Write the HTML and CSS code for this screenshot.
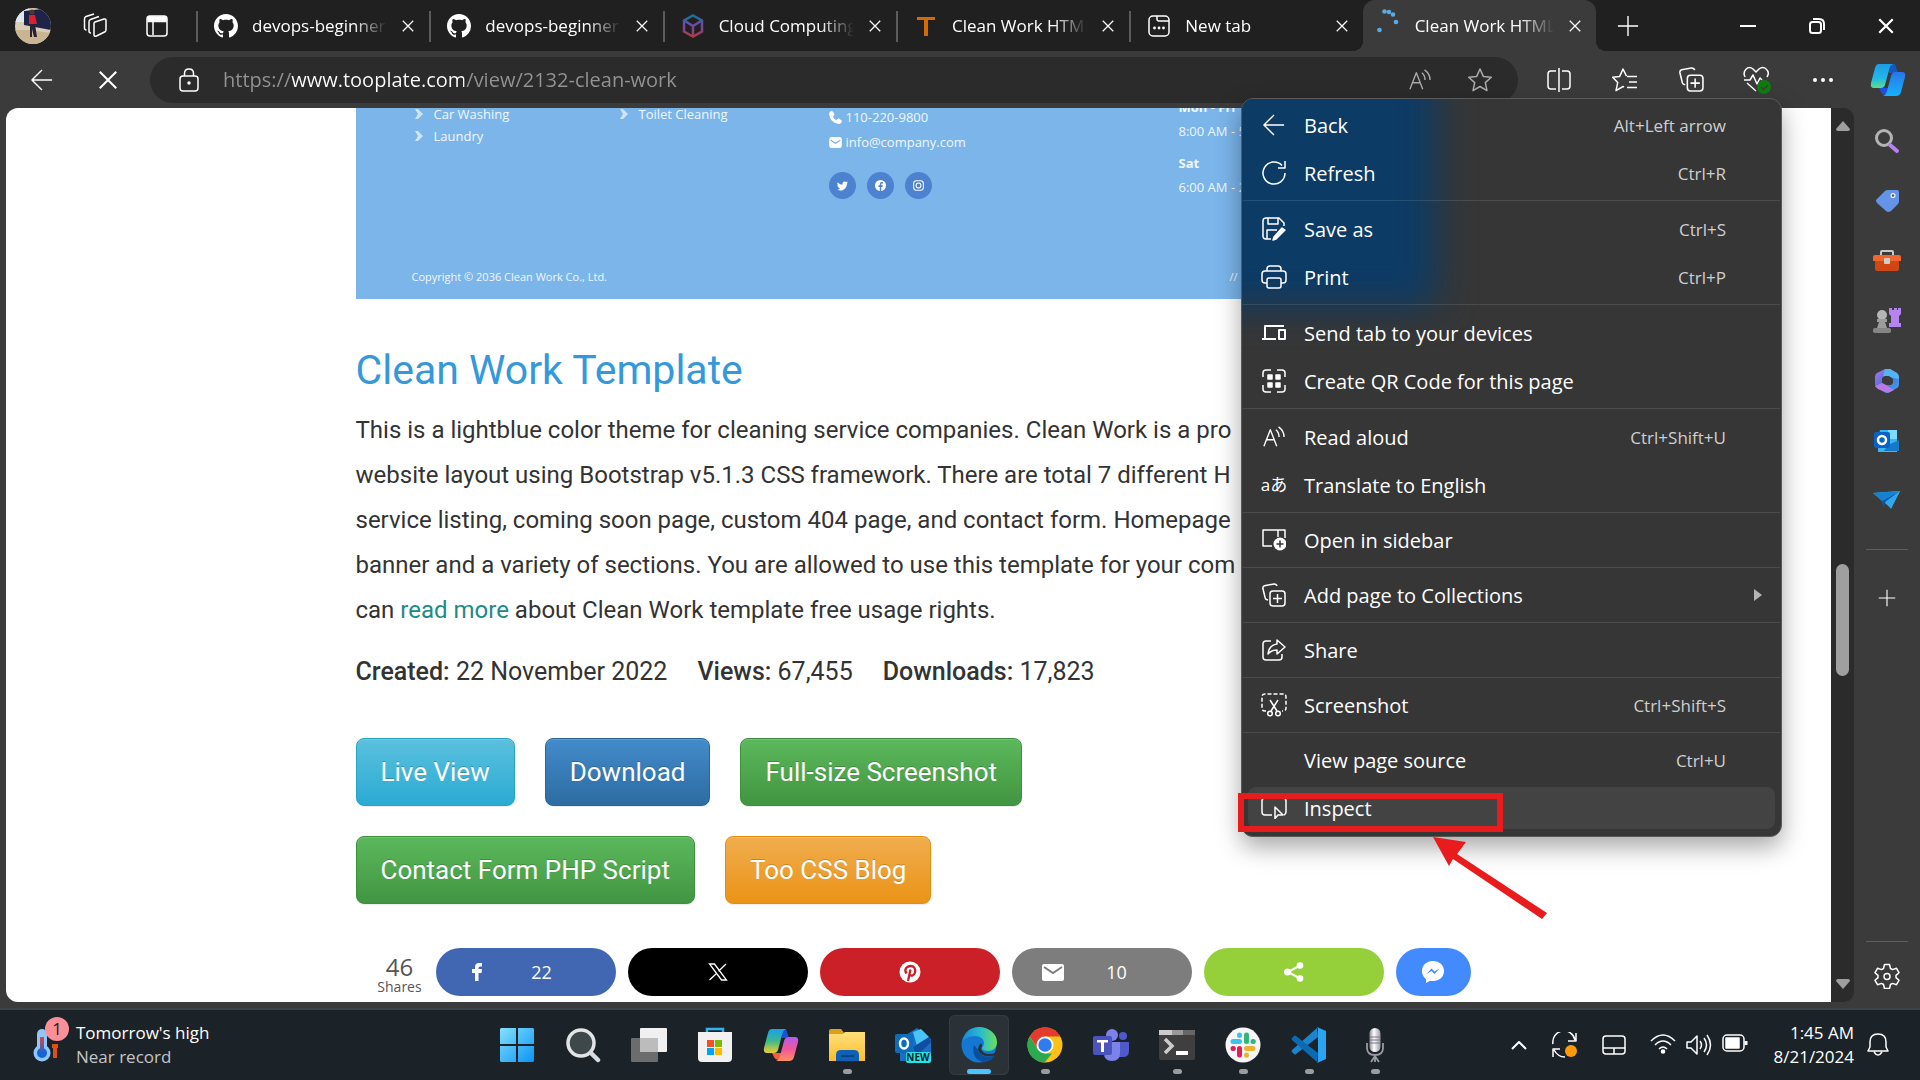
FILE: index.html
```html
<!DOCTYPE html>
<html lang="en">
<head>
<meta charset="utf-8">
<meta name="viewport" content="width=device-width, initial-scale=1">
<title>Clean Work HTML Template</title>
<link rel="stylesheet" href="styles.css">
</head>
<body>
<svg class="defs" aria-hidden="true">
  <defs>
    <symbol id="i-x" viewBox="0 0 16 16"><path d="M2 2l12 12M14 2L2 14"/></symbol>
    <symbol id="i-back" viewBox="0 0 24 24"><path d="M23 12H1M12 1L1 12l11 11"/></symbol>
    <symbol id="i-plus" viewBox="0 0 24 24"><path d="M12 1v22M1 12h22"/></symbol>
    <symbol id="i-github" viewBox="0 0 16 16"><path fill="#fff" stroke="none" d="M8 0C3.58 0 0 3.58 0 8c0 3.54 2.29 6.53 5.47 7.59.4.07.55-.17.55-.38 0-.19-.01-.82-.01-1.49-2.01.37-2.53-.49-2.69-.94-.09-.23-.48-.94-.82-1.13-.28-.15-.68-.52-.01-.53.63-.01 1.08.58 1.23.82.72 1.21 1.87.87 2.33.66.07-.52.28-.87.51-1.07-1.78-.2-3.64-.89-3.64-3.95 0-.87.31-1.59.82-2.15-.08-.2-.36-1.02.08-2.12 0 0 .67-.21 2.2.82.64-.18 1.32-.27 2-.27s1.36.09 2 .27c1.53-1.04 2.2-.82 2.2-.82.44 1.1.16 1.92.08 2.12.51.56.82 1.27.82 2.15 0 3.07-1.87 3.75-3.65 3.95.29.25.54.73.54 1.48 0 1.07-.01 1.93-.01 2.2 0 .21.15.46.55.38A8.01 8.01 0 0 0 16 8c0-4.42-3.58-8-8-8z"/></symbol>
    <symbol id="i-read" viewBox="0 0 24 24"><path d="M1 22L8 4l7 18M4 15h8M14 4c2.500 2 3.500 4.500 3.500 8M17 1c4 3 6 7 6 11"/></symbol>
    <symbol id="i-collect" viewBox="0 0 24 24"><path d="M6 17L4.500 16.500Q3.500 16 3.200 15L.9 5.500Q.6 3.300 2.500 2.700L12 .9Q14.500 .8 15 3"/><rect x="8" y="8" width="15" height="15" rx="3"/><path d="M15.500 11v9M11 15.500h9"/></symbol>
    <symbol id="i-chev" viewBox="0 0 10 12"><path d="M1 1h3l5 5-5 5H1l3-5z" fill="#cfe4f8" stroke="none"/></symbol>
    <linearGradient id="g-cop1" x1="0" y1="0" x2="0" y2="1"><stop offset="0" stop-color="#1d9be8"/><stop offset=".6" stop-color="#22b8e6"/><stop offset="1" stop-color="#5be08a"/></linearGradient>
    <linearGradient id="g-cop2" x1="0" y1="0" x2="0" y2="1"><stop offset="0" stop-color="#2a75e8"/><stop offset="1" stop-color="#14b4fa"/></linearGradient>
    <linearGradient id="g-cop3" x1="0" y1="0" x2="0" y2="1"><stop offset="0" stop-color="#1b9ff0"/><stop offset=".5" stop-color="#3cb88c"/><stop offset="1" stop-color="#f2cc2c"/></linearGradient>
    <linearGradient id="g-cop4" x1="0" y1="0" x2="0" y2="1"><stop offset="0" stop-color="#b45cf0"/><stop offset=".5" stop-color="#f0569c"/><stop offset="1" stop-color="#ff9060"/></linearGradient>
    <linearGradient id="g-win" x1="0" y1="0" x2="1" y2="1"><stop offset="0" stop-color="#85e0fd"/><stop offset="1" stop-color="#0a94f5"/></linearGradient>
    <linearGradient id="g-fold" x1="0" y1="0" x2="0" y2="1"><stop offset="0" stop-color="#ffe07a"/><stop offset="1" stop-color="#fcbe2e"/></linearGradient>
    <linearGradient id="g-edge" x1="0" y1="0" x2="1" y2="0"><stop offset="0" stop-color="#1887d8"/><stop offset=".5" stop-color="#28b8d0"/><stop offset="1" stop-color="#6ae05c"/></linearGradient>
    <linearGradient id="g-365" x1="0" y1="0" x2="1" y2="1"><stop offset="0" stop-color="#b078e8"/><stop offset=".5" stop-color="#4c6ce0"/><stop offset="1" stop-color="#38b0ee"/></linearGradient>
    <linearGradient id="g-hex" x1="0" y1="0" x2="0" y2="1"><stop offset="0" stop-color="#16749c"/><stop offset=".5" stop-color="#7a44a4"/><stop offset="1" stop-color="#a83c44"/></linearGradient>
    <linearGradient id="g-mic" x1="0" y1="0" x2="1" y2="0"><stop offset="0" stop-color="#8c8c98"/><stop offset=".4" stop-color="#fff"/><stop offset="1" stop-color="#9a9aa6"/></linearGradient>
    <linearGradient id="g-therm" x1="0" y1="0" x2="0" y2="1"><stop offset="0" stop-color="#e8403c"/><stop offset="1" stop-color="#1464d8"/></linearGradient>
  </defs>
</svg>

<header class="tabstrip">
  <div class="tab-tools">
    <button class="icon-btn" aria-label="Profile"><svg width="36" height="36" viewBox="0 0 36 36"><clipPath id="c-av"><circle cx="18" cy="18" r="18"/></clipPath><g clip-path="url(#c-av)"><path fill="#d9cdb8" d="M0 0h36v36H0z"/><path fill="#dfe8f0" d="M0 0h14v14H0z"/><path fill="#1d2447" d="M9 3l27-3v22l-27-5z"/><path fill="#c9b592" d="M0 22h14l22 3v11H0z"/><path fill="#d8202e" d="M14 7h6l2 9h-8z"/><circle cx="17" cy="4" r="2.500" fill="#5a3428"/><path fill="#2a2036" d="M15 16h5l2 13h-3l-2-8v8h-2z"/></g></svg></button>
    <button class="icon-btn" aria-label="Workspaces"><svg class="ln" width="26" height="26" viewBox="0 0 26 26"><path d="M13 9l9-3q2-.5 2 1.500v9q0 2-1.500 2.500l-8 4Q12 24 12 21.500v-11Q12 9.500 13 9zM9 20q-2 0-2-2V9q0-2 1.500-2.500L17 3.500M4.500 17q-2 0-2-2V6q0-2 1.500-2.500L12 1"/></svg></button>
    <button class="icon-btn" aria-label="Tab actions"><svg class="ln" width="22" height="22" viewBox="0 0 22 22"><rect x="1" y="1" width="20" height="20" rx="3"/><path d="M2 2h18v4.500H2z" fill="#fff"/><path d="M7 7v13"/></svg></button>
  </div>
  <nav class="tabs" aria-label="Tabs">
    <div class="tab"><svg width="24" height="24"><use href="#i-github"/></svg><button class="tab-name">devops-beginner-to-advanced</button><button class="close" aria-label="Close tab"><svg class="ln" width="14" height="14"><use href="#i-x"/></svg></button></div>
    <div class="tab"><svg width="24" height="24"><use href="#i-github"/></svg><button class="tab-name">devops-beginner-to-advanced</button><button class="close" aria-label="Close tab"><svg class="ln" width="14" height="14"><use href="#i-x"/></svg></button></div>
    <div class="tab"><svg width="24" height="24" viewBox="0 0 24 24" fill="none" stroke="url(#g-hex)" stroke-width="2.500"><path d="M12 1.500l9 5v11l-9 5-9-5v-11zM4 7l8 5 8-5M12 12v10"/></svg><button class="tab-name">Cloud Computing Services</button><button class="close" aria-label="Close tab"><svg class="ln" width="14" height="14"><use href="#i-x"/></svg></button></div>
    <div class="tab"><svg width="24" height="24" viewBox="0 0 24 24"><path fill="#d66a04" d="M3 3h18v3h-7v16h-4V6H3z"/></svg><button class="tab-name">Clean Work HTML Template</button><button class="close" aria-label="Close tab"><svg class="ln" width="14" height="14"><use href="#i-x"/></svg></button></div>
    <div class="tab"><svg class="ln" width="24" height="24" viewBox="0 0 24 24"><rect x="2" y="2" width="20" height="20" rx="4"/><path d="M10 2v3q0 2 2 2h10"/><g fill="#fff" stroke="none"><circle cx="7.500" cy="14" r="1.400"/><circle cx="12" cy="14" r="1.400"/><circle cx="16.500" cy="14" r="1.400"/></g></svg><button class="tab-name">New tab</button><button class="close" aria-label="Close tab"><svg class="ln" width="14" height="14"><use href="#i-x"/></svg></button></div>
    <div class="tab active"><svg class="spinner" width="24" height="24" viewBox="0 0 24 24" fill="#5aaae6"><circle cx="2.500" cy="21" r="2.300"/><circle cx="7.500" cy="2.500" r="2.300"/><circle cx="12" cy="3" r="2.300"/><circle cx="16" cy="5.500" r="2.300"/><circle cx="19" cy="13" r="2.300"/></svg><button class="tab-name">Clean Work HTML Template</button><button class="close" aria-label="Close tab"><svg class="ln" width="14" height="14"><use href="#i-x"/></svg></button></div>
  </nav>
  <button class="icon-btn new-tab" aria-label="New tab"><svg class="ln" width="22" height="22"><use href="#i-plus"/></svg></button>
  <div class="win-controls">
    <button class="icon-btn" aria-label="Minimize"><svg class="ln2" width="16" height="16"><path d="M0 8h16"/></svg></button>
    <button class="icon-btn" aria-label="Restore"><svg class="ln2" width="16" height="16" viewBox="0 0 16 16"><rect x="1" y="4" width="11" height="11" rx="2.500"/><path d="M4 1h6q5 0 5 5v6"/></svg></button>
    <button class="icon-btn" aria-label="Close"><svg class="ln2" width="18" height="18"><use href="#i-x"/></svg></button>
  </div>
</header>

<div class="toolbar">
  <button class="icon-btn nav-btn" aria-label="Back"><svg class="ln" width="24" height="22"><use href="#i-back"/></svg></button>
  <button class="icon-btn nav-btn" aria-label="Stop loading"><svg class="ln" width="22" height="22"><use href="#i-x"/></svg></button>
  <div class="address">
    <svg class="ln" width="20" height="24" viewBox="0 0 20 24"><rect x="1" y="8" width="18" height="15" rx="3"/><path d="M5.500 8V5.500q0-4.500 4.500-4.500t4.500 4.500V8"/><circle cx="10" cy="15" r="1" fill="#fff"/></svg>
    <input class="url" type="text" aria-label="Address" value="https://www.tooplate.com/view/2132-clean-work">
    <button class="icon-btn dim" aria-label="Read aloud"><svg class="ln" width="24" height="22"><use href="#i-read"/></svg></button>
    <button class="icon-btn dim" aria-label="Add to favorites"><svg class="ln" width="26" height="26" viewBox="0 0 26 26"><path d="M13 2l3.300 7.400 8 .8-6 5.400 1.700 8L13 19.500 6 23.600l1.700-8-6-5.400 8-.8z"/></svg></button>
  </div>
  <div class="tools">
    <button class="icon-btn" aria-label="Split screen"><svg class="ln" width="24" height="24" viewBox="0 0 24 24"><path d="M9 3H4Q1 3 1 6v12q0 3 3 3h5M15 3h5q3 0 3 3v12q0 3-3 3h-5M12 0v24"/></svg></button>
    <button class="icon-btn" aria-label="Favorites"><svg class="ln" width="26" height="26" viewBox="0 0 26 26"><path d="M14.500 9.200L11 2 7.700 9.400l-7 .8 5 5.400-1.700 8L11 19.500l1 .6M15 9.500h10M17 15h8M15 20.500h10"/></svg></button>
    <button class="icon-btn" aria-label="Collections"><svg class="ln" width="25" height="25"><use href="#i-collect"/></svg></button>
    <button class="icon-btn" aria-label="Browser essentials"><svg class="ln" width="28" height="28" viewBox="0 0 28 28"><path d="M2 11C-1 5 5-1 10 3l3 3 3-3c5-4 12 2 8 8M1 14h6l3-5 4 9 3-6 2 2M4 17l9 8"/><circle cx="21" cy="21" r="7" fill="#107c10" stroke="none"/><path d="M18 21l2.500 2.500L25 19" stroke="#3c3c3c"/></svg></button>
    <button class="icon-btn" aria-label="Settings and more"><svg width="22" height="22" fill="#fff"><circle cx="3" cy="11" r="2"/><circle cx="11" cy="11" r="2"/><circle cx="19" cy="11" r="2"/></svg></button>
    <button class="icon-btn" aria-label="Copilot"><svg width="36" height="34" viewBox="0 0 36 34"><path fill="#1659b8" d="M20 1h5l3 9h-9z"/><path fill="#1d4fe0" d="M9 25h11l-3 7q-5 0-6-3z"/><path fill="url(#g-cop1)" d="M9 1h14q-3 1-4 6l-4 15q-1 3-4 3H4q-4 0-3-5L5 5q1-4 4-4z"/><path fill="url(#g-cop2)" d="M26 9h6q4 0 3 5l-4 15q-1 4-5 4H13q3-1 4-5l4-15q1-4 5-4z"/></svg></button>
  </div>
</div>

<div class="workspace">
  <main class="page">
    <div class="container">
      <section class="banner">
        <div class="banner-cols">
          <ul class="svc"><li><svg width="10" height="12"><use href="#i-chev"/></svg>Car Washing</li><li><svg width="10" height="12"><use href="#i-chev"/></svg>Laundry</li></ul>
          <ul class="svc"><li><svg width="10" height="12"><use href="#i-chev"/></svg>Toilet Cleaning</li></ul>
          <div class="contact">
            <p><svg width="13" height="13" viewBox="0 0 16 16" fill="#fff"><path d="M4 0l3 4-2 3q1 3 4 4l3-2 4 3q-1 4-4 4Q1 14 0 3q1-3 4-3z"/></svg>110-220-9800</p>
            <p><svg width="13" height="11" viewBox="0 0 16 14"><rect width="16" height="14" rx="3" fill="#fff"/><path d="M2 4l6 4 6-4" fill="none" stroke="#7bb5ea" stroke-width="1.500"/></svg>info@company.com</p>
            <div class="social">
              <a href="#" aria-label="Twitter"><svg width="11" height="10" viewBox="0 0 24 20" fill="#fff"><path d="M24 2.500l-2.500 2.400C22 14 14 20 7.500 20 4.700 20 2 19.200 0 17.800c2.600.3 5-.4 7-2-2-.1-3.800-1.500-4.500-3.400h2C2.300 11.900.7 10 .7 7.600l2.100.5C.6 6.600.1 4 1.300 1.800 4 4.900 7.700 6.800 11.900 7 11 3.500 13.600 0 17 0c1.500 0 2.700.6 3.600 1.500l3-1.200-2 2.700z"/></svg></a>
              <a href="#" aria-label="Facebook"><svg width="11" height="11" viewBox="0 0 16 16"><circle cx="8" cy="8" r="8" fill="#fff"/><path fill="#4c82d0" d="M7 16V10H5V7.500h2V6q0-3 3-3h1.500v2H10q-1 0-1 1v1.500h2.300L11 10H9v6z"/></svg></a>
              <a href="#" aria-label="Instagram"><svg width="11" height="11" viewBox="0 0 16 16" fill="none" stroke="#fff" stroke-width="1.500"><rect x="1" y="1" width="14" height="14" rx="4"/><circle cx="8" cy="8" r="3.500"/></svg></a>
            </div>
          </div>
          <div class="hours"><b>Mon - Fri</b><span>8:00 AM - 5:30 PM</span><b>Sat</b><span>6:00 AM - 2:30 PM</span></div>
        </div>
        <footer class="banner-foot"><span>Copyright © 2036 Clean Work Co., Ltd.</span><span>//</span></footer>
      </section>

      <h1>Clean Work Template</h1>
      <p class="desc">
        <span>This is a lightblue color theme for cleaning service companies. Clean Work is a pro</span>
        <span>website layout using Bootstrap v5.1.3 CSS framework. There are total 7 different H</span>
        <span>service listing, coming soon page, custom 404 page, and contact form. Homepage</span>
        <span>banner and a variety of sections. You are allowed to use this template for your com</span>
        <span>can <a href="#">read more</a> about Clean Work template free usage rights.</span>
      </p>
      <p class="stats"><span><b>Created:</b> 22 November 2022</span><span><b>Views:</b> 67,455</span><span><b>Downloads:</b> 17,823</span></p>

      <div class="actions">
        <button class="btn info">Live View</button>
        <button class="btn primary">Download</button>
        <button class="btn success">Full-size Screenshot</button>
      </div>
      <div class="actions">
        <button class="btn success">Contact Form PHP Script</button>
        <button class="btn warning">Too CSS Blog</button>
      </div>

      <div class="share">
        <div class="total"><b>46</b><span>Shares</span></div>
        <button class="pill fb counted" aria-label="Facebook, 22"><svg width="24" height="20" viewBox="0 0 24 20"><path fill="#fff" d="M10 19v-8H7V7h3V5q0-4 4-4h3v3.500h-2q-1.500 0-1.500 1.500v1h3.500l-.5 4h-3v8z"/></svg><span>22</span></button>
        <button class="pill tw" aria-label="X"><svg width="20" height="18" viewBox="0 0 20 18" fill="none" stroke="#fff" stroke-width="1.300"><path d="M1.500 1h5l12 16h-5zM18 1l-7.500 7.200M1.500 17L9 10"/></svg></button>
        <button class="pill pin" aria-label="Pinterest"><svg width="22" height="22" viewBox="0 0 22 22"><circle cx="11" cy="11" r="10.500" fill="#fff"/><path d="M7.500 12.500C4.500 8 8 5 11.500 5s5.500 3 4.500 6.500-4.500 4-5 2M11.500 8.500L9 20" fill="none" stroke="#cb2027" stroke-width="2.300"/></svg></button>
        <button class="pill mail counted" aria-label="Email, 10"><svg width="22" height="17" viewBox="0 0 22 17"><rect width="22" height="17" rx="2" fill="#fff"/><path d="M2 3l9 6 9-6" fill="none" stroke="#7d7d7d" stroke-width="2"/></svg><span>10</span></button>
        <button class="pill st" aria-label="Share"><svg width="20" height="20" viewBox="0 0 20 20" fill="#fff"><circle cx="3.500" cy="10" r="3.500"/><circle cx="16" cy="3.500" r="3.300"/><circle cx="16" cy="16.500" r="3.300"/><path d="M16 3.500L4 10l12 6.500" fill="none" stroke="#fff" stroke-width="2"/></svg></button>
        <button class="pill msg" aria-label="Messenger"><svg width="24" height="24" viewBox="0 0 24 24"><path fill="#fff" d="M12 1C5.500 1 1 5.300 1 11c0 3.500 1.500 6 4 8v4l4-2.300q1.500.3 3 .3c6.500 0 11-4.300 11-10S18.500 1 12 1z"/><path d="M5.500 14l5-5.500 3 3 5-3-5 5.500-3-3z" fill="#448aff"/></svg></button>
      </div>
    </div>
  </main>
  <div class="scroll" aria-hidden="true"><svg width="16" height="10"><path d="M8 0l7 8q0 2-2 2H3Q1 10 1 8z"/></svg><div class="track"><i class="thumb"></i></div><svg width="16" height="10"><path d="M8 10l7-8q0-2-2-2H3Q1 0 1 2z"/></svg></div>
  <aside class="sidebar">
    <button class="icon-btn" aria-label="Search"><svg width="26" height="26" viewBox="0 0 26 26" fill="none"><circle cx="10" cy="10" r="7.500" stroke="#b4b4b4" stroke-width="3"/><path d="M16 17l7 6" stroke="#b583ea" stroke-width="4" stroke-linecap="round"/></svg></button>
    <button class="icon-btn" aria-label="Shopping"><svg width="26" height="26" viewBox="0 0 26 26"><path fill="#6593e8" d="M14 2h9q2 0 2 2v9q0 2-1 3l-7 7q-3 2-5 0l-9-8q-2-3 0-4l8-8q1-1 3-1z"/><circle cx="19" cy="7.500" r="2.500" fill="#fff"/><circle cx="19" cy="7.500" r="1.200" fill="#2b4d9c"/></svg></button>
    <button class="icon-btn" aria-label="Tools"><svg width="28" height="24" viewBox="0 0 28 24"><path d="M8 7V3q0-1 1-1h10q1 0 1 1v4" fill="none" stroke="#c8c8c8" stroke-width="2"/><path fill="#f0662c" d="M2 6h24q2 0 2 2v4H0V8q0-2 2-2z"/><path fill="#cf4712" d="M2 12h24v8q0 2-2 2H4q-2 0-2-2z"/><rect x="11" y="9" width="6" height="6" rx="1" fill="#ccc"/></svg></button>
    <button class="icon-btn" aria-label="Games"><svg width="28" height="28" viewBox="0 0 28 28"><circle cx="9" cy="8" r="5" fill="#b5b5b5"/><path fill="#9c9c9c" d="M4 12h10v3h-2l2 6H4l2-6H4z"/><rect y="21" width="18" height="5" rx="2" fill="#858585"/><path fill="#b684ee" d="M16 1h3v2h2V1h3v2h1V1h3v6l-2 2v7h2v4H16v-4h2V9l-2-2z"/></svg></button>
    <button class="icon-btn" aria-label="Microsoft 365"><svg width="26" height="26" viewBox="0 0 26 26"><path fill="url(#g-365)" fill-rule="evenodd" d="M11 1h5l7 4q2 1 2 4v7q0 3-2 4l-7 4q-3 2-6 0l-7-4q-2-1-2-4V9q0-3 2-4zM11 8l-3 2v5l4 2h5l2-2v-4l-4-3z"/><path fill="#52b4f2" d="M11 1h5l7 4q2 2 2 6l-6-1-4-2h-6z"/><path fill="#b77be6" d="M1 18l7-3 4 2 8 5-4 2q-2 1-5 0l-7-3z"/></svg></button>
    <button class="icon-btn" aria-label="Outlook"><svg width="26" height="24" viewBox="0 0 26 24"><path fill="#38b6f2" d="M6 1h17v22H4V12z"/><path fill="#7bdcff" d="M14 1h9v9h-9z"/><path fill="#147ac8" d="M14 16l11-5v11H10z"/><rect y="3" width="16" height="16" rx="2" fill="#0a63c4"/><circle cx="8" cy="11" r="4" fill="none" stroke="#fff" stroke-width="2.500"/></svg></button>
    <button class="icon-btn" aria-label="Drop"><svg width="28" height="22" viewBox="0 0 28 22"><path fill="#3cc2f5" d="M0 3l27-2-9 17-6-5z"/><path fill="#1482d2" d="M0 3l27-2L9 11z"/><path fill="#0b56a4" d="M9 11L27 1 12 13l-2 5z"/><path fill="#2fa8ee" d="M12 12L27 1l-9 18z"/></svg></button>
    <hr>
    <button class="icon-btn" aria-label="Customize"><svg class="ln" width="18" height="18"><use href="#i-plus"/></svg></button>
    <hr class="push">
    <button class="icon-btn gear" aria-label="Settings"><svg class="ln" width="26" height="26" viewBox="0 0 26 26"><path d="M10.500 1.500h5l1 4 2 1.100 4-1.300 2.500 4.400-3 2.700v2.200l3 2.700-2.500 4.400-4-1.300-2 1.100-1 4h-5l-1-4-2-1.100-4 1.300L1 17.300l3-2.700v-2.200L1 9.700l2.500-4.400 4 1.300 2-1.100z"/><circle cx="13" cy="13.500" r="3"/></svg></button>
  </aside>
</div>

<div class="menu-layer">
  <menu class="menu">
    <li><button><svg class="ln" width="24" height="22"><use href="#i-back"/></svg><span>Back</span><kbd>Alt+Left arrow</kbd></button></li>
    <li><button><svg class="ln" width="26" height="26" viewBox="0 0 26 26"><path d="M24 13A11 11 0 1 1 21 5.500M24 1v7h-7"/></svg><span>Refresh</span><kbd>Ctrl+R</kbd></button></li>
    <li class="sep"></li>
    <li><button><svg class="ln" width="24" height="24" viewBox="0 0 24 24"><path d="M9 22H4q-3 0-3-3V4q0-3 3-3h13l5 5v3M6 1v6h10V1M5 22v-9h10"/><path d="M12 20l8-9 3 2-9 9-3 1z" fill="#fff"/></svg><span>Save as</span><kbd>Ctrl+S</kbd></button></li>
    <li><button><svg class="ln" width="26" height="24" viewBox="0 0 26 24"><path d="M6 18H4q-3 0-3-3V9q0-3 3-3h18q3 0 3 3v6q0 3-3 3h-2M6 6V4q0-3 3-3h8q3 0 3 3v2"/><rect x="6" y="13" width="14" height="10" rx="2"/></svg><span>Print</span><kbd>Ctrl+P</kbd></button></li>
    <li class="sep"></li>
    <li><button><svg class="ln2" width="24" height="18" viewBox="0 0 24 18"><path d="M3 14V2h19M0 15h14M17 6h6v9h-6z"/></svg><span>Send tab to your devices</span></button></li>
    <li><button><svg class="ln" width="24" height="24" viewBox="0 0 24 24"><path d="M1 8V4q0-3 3-3h5M15 1h5q3 0 3 3v4M1 16v4q0 3 3 3h5M15 23h5q3 0 3-3v-4"/><path d="M6 6h4v4H6zM14 6h4v4h-4zM6 14h4v4H6zM14 14h4v4h-4z" fill="#fff"/></svg><span>Create QR Code for this page</span></button></li>
    <li class="sep"></li>
    <li><button><svg class="ln" width="24" height="22"><use href="#i-read"/></svg><span>Read aloud</span><kbd>Ctrl+Shift+U</kbd></button></li>
    <li><button><i class="lang" aria-hidden="true">aあ</i><span>Translate to English</span></button></li>
    <li class="sep tight"></li>
    <li><button><svg class="ln" width="24" height="22" viewBox="0 0 24 22"><path d="M10 17H1V1h22v8M16 1v7"/><circle cx="18" cy="15" r="6.500" fill="#fff" stroke="none"/><path d="M18 11.500v7M14.500 15h7" stroke="#363636"/></svg><span>Open in sidebar</span></button></li>
    <li class="sep tight"></li>
    <li><button><svg class="ln" width="24" height="24"><use href="#i-collect"/></svg><span>Add page to Collections</span><svg class="more" width="8" height="12"><path d="M0 0l8 6-8 6z" fill="#b4b4b4"/></svg></button></li>
    <li class="sep tight"></li>
    <li><button><svg class="ln" width="24" height="22" viewBox="0 0 24 22"><path d="M9 2H4Q1 2 1 5v13q0 3 3 3h13q3 0 3-3v-3M15 1l8 7-8 7v-4q-6 0-9 4 1-9 9-10z"/></svg><span>Share</span></button></li>
    <li class="sep tight"></li>
    <li><button><svg class="ln" width="26" height="24" viewBox="0 0 26 24"><path stroke-dasharray="4 2" d="M5 18H4q-3 0-3-3V4q0-3 3-3h18q3 0 3 3v11q0 3-3 3h-1"/><path d="M9 7l7 11M17 7l-7 11"/><circle cx="9" cy="20.500" r="2.300"/><circle cx="17" cy="20.500" r="2.300"/></svg><span>Screenshot</span><kbd>Ctrl+Shift+S</kbd></button></li>
    <li class="sep tight"></li>
    <li><button><i></i><span>View page source</span><kbd>Ctrl+U</kbd></button></li>
    <li><button class="hover"><svg class="ln" width="26" height="22" viewBox="0 0 26 22"><path d="M11 18H4q-3 0-3-3V4q0-3 3-3h18q3 0 3 3v11q0 2-2 3M14 10l8 8h-5l-3 3.500z"/></svg><span>Inspect</span></button></li>
  </menu>
  <div class="highlight"></div>
  <svg class="pointer" width="114" height="82" viewBox="0 0 114 82"><path fill="#e81c1c" d="M0 0l33 5-9 12 90 59-5 6-89-60-4 7z"/></svg>
</div>

<footer class="taskbar">
  <button class="weather">
    <svg width="36" height="46" viewBox="0 0 36 46"><rect x="4" y="12" width="10" height="26" rx="5" fill="#8cc8fa"/><circle cx="9" cy="36" r="8.500" fill="#8cc8fa"/><circle cx="9" cy="36" r="5" fill="#1464d8"/><path d="M7 20h4v16H7z" fill="url(#g-therm)"/><path d="M22 41V27M19 29h6" stroke="#e05010" stroke-width="4" fill="none"/><circle cx="24" cy="12" r="12" fill="#fb8f98"/><text x="24" y="18" text-anchor="middle">1</text></svg>
    <span>Tomorrow's high<small>Near record</small></span>
  </button>
  <nav class="apps" aria-label="Apps">
    <button aria-label="Start"><svg width="36" height="36" viewBox="0 0 36 36"><path fill="url(#g-win)" d="M1 2l1-1h15v16H1zM19 1h15l1 1v15H19zM1 19h16v16H2l-1-1zM19 19h16v15l-1 1H19z"/></svg></button>
    <button aria-label="Search"><svg width="36" height="36" viewBox="0 0 36 36"><circle cx="16" cy="16" r="13" fill="#3e474a" stroke="#e2e4e6" stroke-width="3.500"/><path d="M26 26l7 7" stroke="#d8dce0" stroke-width="4.500" stroke-linecap="round"/></svg></button>
    <button aria-label="Task view"><svg width="38" height="36" viewBox="0 0 38 36"><rect x="1" y="11" width="27" height="24" rx="1" fill="#6a6c6e"/><rect x="10" y="1" width="27" height="24" rx="1" fill="#f0f0f0"/><path fill="#bcbcbc" d="M10 11h18v14H10z"/></svg></button>
    <button aria-label="Store"><svg width="36" height="36" viewBox="0 0 36 36"><path d="M10 6V2h16v4" fill="none" stroke="#34b2ee" stroke-width="2.500"/><path fill="#f1f1f1" d="M1 5h34v26q0 4-4 4H5q-4 0-4-4z"/><path fill="#f25022" d="M10 13h7v7h-7z"/><path fill="#7fba00" d="M18 13h7v7h-7z"/><path fill="#00a4ef" d="M10 21h7v7h-7z"/><path fill="#ffb900" d="M18 21h7v7h-7z"/></svg></button>
    <button aria-label="Copilot"><svg width="36" height="34" viewBox="0 0 36 34"><path fill="#1c50d8" d="M18 1h5l3 9h-7z"/><path fill="#f0603c" d="M9 25h11l-3 7q-5 0-6-3z"/><path fill="url(#g-cop3)" d="M9 1h14q-3 1-4 6l-4 15q-1 3-4 3H4q-4 0-3-5L5 5q1-4 4-4z"/><path fill="url(#g-cop4)" d="M26 9h6q4 0 3 5l-4 15q-1 4-5 4H13q3-1 4-5l4-15q1-4 5-4z"/></svg></button>
    <button class="open" aria-label="File Explorer"><svg width="36" height="36" viewBox="0 0 36 36"><path fill="#dda01a" d="M0 4q0-2 2-2h10l4 5v6H0z"/><path fill="url(#g-fold)" d="M0 7h14l2-2h20v29H0z"/><path fill="#0e62b6" d="M7 34v-6q0-5 5-5h13q5 0 5 5v6z"/><path stroke="#0a3f80" stroke-width="2" d="M12 29h13"/></svg></button>
    <button aria-label="Outlook"><svg width="36" height="36" viewBox="0 0 36 36"><path fill="#1a6fc4" d="M5 12L22 1l14 11v22H5z"/><path fill="#48c4f5" d="M18 5l8-3 8 8-12 9z"/><path fill="#0f4ea0" d="M18 20l16-10 2 5-14 14z"/><rect y="7" width="18" height="19" rx="2" fill="#0f6cbd"/><ellipse cx="9" cy="16.500" rx="4" ry="5" fill="none" stroke="#fff" stroke-width="2.500"/><rect x="11" y="25" width="25" height="11" rx="2" fill="#24e4e4"/><text class="new" x="23" y="34" text-anchor="middle">NEW</text></svg></button>
    <button class="open current" aria-label="Edge"><svg width="36" height="36" viewBox="0 0 36 36"><circle cx="18" cy="18" r="17.500" fill="#1478d2"/><path fill="url(#g-edge)" d="M1 15C3 5 10 0 18 0c10 0 18 7 18 15 0 6-4 9-9 9-4 0-6-1-6-3 0-1 2-2 2-5 0-4-4-7-9-7-6 0-11 3-13 6z"/><path fill="#0a4f9e" d="M13 18c-3 9 3 18 12 17 4-1 7-3 9-7-6 3-15 2-17-5z"/><path fill="#2a3238" d="M20 16q2 3 0 6 2 5 8 5 4 0 6-1l2-4v7l-2-1c-6 3-16 1-17-6q0-3 3-6z"/></svg></button>
    <button class="open" aria-label="Chrome"><svg width="36" height="36" viewBox="0 0 36 36"><circle cx="18" cy="18" r="17.500" fill="#fbc116"/><path fill="#e33b2e" d="M2.800 9.200A17.500 17.500 0 0 1 33.200 9.500H18L10.500 22z"/><path fill="#2da94f" d="M2.800 9.200L10.500 22.500 18 26.500h7L17.500 35.500A17.500 17.500 0 0 1 2.800 9.200z"/><circle cx="18" cy="18" r="8.500" fill="#fff"/><circle cx="18" cy="18" r="6.700" fill="#2f7cf0"/></svg></button>
    <button aria-label="Teams"><svg width="36" height="36" viewBox="0 0 36 36"><circle cx="19" cy="8" r="6" fill="#7b83eb"/><circle cx="30" cy="9" r="4" fill="#5059c9"/><path fill="#5059c9" d="M22 15h14v9q0 6-6 6h-6z"/><path fill="#7b83eb" d="M11 15h16v11q0 8-8 8t-8-8z"/><rect y="9" width="19" height="19" rx="2" fill="#4b53bc"/><path fill="#fff" d="M4 13h11v2.500H11V25H8v-9.500H4z"/></svg></button>
    <button class="open" aria-label="Terminal"><svg width="36" height="30" viewBox="0 0 36 30"><path fill="#3f3f3f" d="M0 0h36v28q0 2-2 2H2q-2 0-2-2z"/><path fill="#ccc" d="M0 0h13v5H0z"/><path fill="#999" d="M13 0h11v5H13z"/><path fill="#666" d="M24 0h12v5H24z"/><path d="M6 9l7 7-7 7" fill="none" stroke="#ccc" stroke-width="3.500"/><path fill="#fff" d="M17 21h12v4H17z"/></svg></button>
    <button class="open" aria-label="Slack"><svg width="36" height="36" viewBox="0 0 36 36" stroke-width="5" stroke-linecap="round"><circle cx="18" cy="18" r="17.500" fill="#f6f6f6" stroke="none"/><path stroke="#36c5f0" d="M8 14.500h6.500M14.500 8v.5"/><path stroke="#2eb67d" d="M21.500 8v6.500M28 14.500h.3"/><path stroke="#ecb22e" d="M21.500 21.500H28M21.500 28v.3"/><path stroke="#e01e5a" d="M14.500 21.500V28M8 21.500h.3"/></svg></button>
    <button class="open" aria-label="Visual Studio Code"><svg width="36" height="36" viewBox="0 0 36 36"><path fill="#1b84cc" d="M26 1L1 23q-1 1 0 2l2 2q1 1 2 0L27 10z"/><path fill="#0a6ab4" d="M26 35L1 13q-1-1 0-2l2-2q1-1 2 0l22 17z"/><path fill="#2ba4f2" d="M26 0l9 4v28l-9 4q1-1 1-3V3q0-2-1-3z"/></svg></button>
    <button class="open" aria-label="Voice recorder"><svg width="22" height="36" viewBox="0 0 22 36"><path d="M3 16v5q0 7 8 7t8-7v-5M11 28v7M7 35l4-6 4 6" fill="none" stroke="#9a9aa4" stroke-width="1.800"/><rect x="5.500" y="1" width="11" height="24" rx="5.500" fill="url(#g-mic)"/><path stroke="#77778a" d="M6 10h10M6 13h10M6 16h10"/></svg></button>
  </nav>
  <div class="tray">
    <button class="icon-btn" aria-label="Show hidden icons"><svg class="ln2" width="18" height="12"><path d="M2 10l7-7 7 7"/></svg></button>
    <button class="icon-btn" aria-label="Updates"><svg class="ln" width="26" height="26" viewBox="0 0 26 26"><path d="M1 12A11 11 0 0 1 23 8M24 1v8h-8M1 25v-8h7M2 18q4 7 11 7"/><circle cx="19" cy="19" r="6" fill="#ff9a0a" stroke="none"/></svg></button>
    <button class="icon-btn" aria-label="Touchpad"><svg class="ln" width="24" height="20" viewBox="0 0 24 20"><rect x="1" y="1" width="22" height="18" rx="3"/><path d="M1 13h22M12 13v6"/></svg></button>
    <button class="status" aria-label="Network, volume, battery">
      <svg class="ln" width="26" height="20" viewBox="0 0 26 20"><path d="M1 7q12-12 24 0M5 11q8-8 16 0M9 15q4-4 8 0"/><circle cx="13" cy="17.500" r="1.500" fill="#fff"/></svg>
      <svg class="ln" width="26" height="22" viewBox="0 0 26 22"><path d="M1 8h4l6-6v18l-6-6H1zM14 7q3 4 0 8M18 4q5 7 0 14M21 1q7 10 0 20"/></svg>
      <svg class="ln" width="26" height="18" viewBox="0 0 26 18"><rect x="1" y="1" width="21" height="16" rx="4"/><path d="M4 4h13v10H4z" fill="#fff"/><path d="M24 7v4" stroke-width="3"/></svg>
    </button>
    <button class="clock">1:45 AM<br>8/21/2024</button>
    <button class="icon-btn" aria-label="Notifications"><svg class="ln" width="22" height="24" viewBox="0 0 22 24"><path d="M1 18h20l-2-4V9Q19 1 11 1T3 9v5zM7 19q4 6 8 0"/></svg></button>
  </div>
</footer>
</body>
</html>
```
FILE: styles.css
```css
* { box-sizing: border-box; }

body {
  margin: 0;
  height: 100vh;
  display: flex;
  flex-direction: column;
  overflow: hidden;
  position: relative;
  background: #3b3b3b;
  color: #fff;
  font-family: "Open Sans", "Noto Sans", sans-serif;
  font-size: 17px;
}

button {
  font: inherit;
  color: inherit;
  background: none;
  border: 0;
  padding: 0;
}

svg { display: block; flex: none; }
.defs { position: absolute; width: 0; height: 0; }
.ln, .ln2 { fill: none; stroke: #fff; stroke-width: 1.5; stroke-linejoin: round; }
.ln2 { stroke-width: 2; }
.icon-btn { display: grid; place-items: center; }

/* Tab strip */
.tabstrip { display: flex; flex: none; height: 51px; background: #202020; }
.tab-tools { display: grid; grid-template-columns: repeat(3, 62px); width: 196px; align-items: center; padding-left: 2px; flex: none; }
.tabs { display: flex; flex: 0 1 1400px; min-width: 0; }
.tab { display: flex; flex: 1 1 233px; min-width: 0; align-items: center; padding: 0 14px 0 16px; border-left: 2px solid transparent; border-image: linear-gradient(#202020 12px, #5c5c5c 12px 41px, #202020 41px) 1; }
.tab-name { flex: 1; min-width: 0; margin: 0 14px; overflow: hidden; white-space: nowrap; text-align: left; -webkit-mask-image: linear-gradient(90deg, #000 75%, transparent); mask-image: linear-gradient(90deg, #000 75%, transparent); }
.tab.active { position: relative; padding-left: 12px; background: #3b3b3b; border-image: none; border-radius: 12px 12px 0 0; }
.tab.active::before, .tab.active::after { content: ""; position: absolute; bottom: 0; width: 10px; height: 10px; }
.tab.active::before { left: -12px; background: radial-gradient(circle at 0 0, #202020 10px, #3b3b3b 10px); }
.tab.active::after { right: -10px; background: radial-gradient(circle at 100% 0, #202020 10px, #3b3b3b 10px); }
.spinner { align-self: flex-start; margin-top: 9px; }
.new-tab { width: 64px; }
.win-controls { display: grid; grid-template-columns: repeat(3, 69px); margin-left: auto; }

/* Toolbar */
.toolbar { display: flex; flex: none; height: 57px; align-items: center; padding-left: 9px; }
.nav-btn { width: 66px; height: 48px; }
.address { display: flex; flex: 1; height: 46px; margin-left: 9px; padding: 0 16px 0 29px; align-items: center; gap: 16px; border-radius: 23px; background: #2b2b2b; }
.url {
  flex: 1;
  min-width: 0;
  height: 32px;
  margin-left: 8px;
  padding: 0;
  border: 0;
  outline: 0;
  font: 20px "Open Sans", "Noto Sans", sans-serif;
  color: transparent;
  background: linear-gradient(90deg, #939393 68px, #fff 68px 241px, #939393 241px);
  -webkit-background-clip: text;
  background-clip: text;
}
.dim { width: 44px; opacity: .6; }
.tools { display: grid; grid-template-columns: repeat(5, 66px) 64px; margin-left: 8px; }

/* Web page */
.workspace { display: flex; flex: 1; min-height: 0; padding: 0 0 6px 6px; }
.page { flex: 1; min-width: 0; overflow: hidden; border-radius: 12px 0 0 12px; background: #fff; color: #333; font-family: Roboto, "Liberation Sans", sans-serif; }
.container { max-width: 1126px; margin: 0 auto; }
.banner { height: 191px; padding: 0 56px; overflow: hidden; display: flex; flex-direction: column; justify-content: space-between; background: #7bb5ea; color: #f0f7fd; font: 13px/22px "Open Sans", sans-serif; }
.banner-cols { display: grid; grid-template-columns: 205px 212px 350px 1fr; height: 108px; }
.banner p, .svc { margin: 0; padding: 0; list-style: none; }
.svc { margin-top: -5px; padding-left: 2px; }
.svc li, .contact p { display: flex; align-items: center; gap: 10px; }
.contact p { gap: 4px; line-height: 25px; }
.contact { margin-top: -3px; }
.social { display: flex; gap: 11px; padding-top: 17px; }
.social a { display: grid; place-items: center; width: 27px; height: 27px; border-radius: 50%; background: #4c82d0; }
.hours { display: flex; flex-direction: column; margin-top: -12px; }
.hours span { margin: 2px 0 10px; }
.banner-foot { display: flex; justify-content: space-between; padding: 0 188px 11px 0; font-size: 11px; }

h1 { margin: 47px 0 14px; font-size: 41px; line-height: 48px; font-weight: 400; color: #3498db; }
.desc { margin: 0; font-size: 24px; line-height: 45px; }
.desc span { display: block; white-space: nowrap; }
.desc a { color: #1f8a83; text-decoration: none; }
.stats { display: flex; gap: 30px; margin: 0 0 44px; padding-top: 16px; font-size: 25px; line-height: 45px; }
.stats b { font-weight: 500; }
.actions { display: flex; gap: 30px; margin-bottom: 30px; }
.btn { height: 68px; padding: 0 24px; border: 1px solid; border-radius: 8px; color: #fff; font-size: 26px; text-shadow: 0 -1px 0 rgba(0,0,0,.2); box-shadow: inset 0 1px 0 rgba(255,255,255,.15), 0 1px 1px rgba(0,0,0,.08); }
.info { background: linear-gradient(#5bc0de, #2aabd2); border-color: #28a4c9; }
.primary { background: linear-gradient(#428bca, #2d6ca2); border-color: #2b669a; }
.success { background: linear-gradient(#5cb85c, #419641); border-color: #3e8f3e; }
.warning { background: linear-gradient(#f0ad4e, #eb9316); border-color: #e38d13; }

.share { display: grid; grid-template-columns: 48px repeat(5, 180px) 75px; gap: 12px; margin-top: 44px; padding-left: 20px; }
.total { display: flex; flex-direction: column; align-items: center; color: #555; font-family: "Open Sans", sans-serif; padding-top: 6px; }
.total b { font-size: 24px; line-height: 26px; font-weight: 400; }
.total span { font-size: 14px; line-height: 14px; }
.pill { display: flex; align-items: center; justify-content: center; gap: 42px; height: 48px; border-radius: 24px; color: #fff; font-family: "Open Sans", sans-serif; font-size: 18px; }
.counted { padding-right: 34px; }
.fb { background: #4267b2; }
.tw { background: #000; }
.pin { background: #cb2027; }
.mail { background: #7d7d7d; }
.st { background: #95d03a; }
.msg { background: #448aff; }

/* Scrollbar and sidebar */
.scroll { display: flex; flex-direction: column; align-items: center; width: 23px; padding: 13px 0; background: #2b2b2b; border-radius: 0 10px 10px 0; fill: #9f9f9f; }
.track { display: flex; flex-direction: column; flex: 1; }
.track::before { content: ""; flex: 433; }
.track::after { content: ""; flex: 303; }
.thumb { flex: 112; width: 13px; border-radius: 7px; background: #9f9f9f; }
.sidebar { display: flex; flex-direction: column; align-items: center; width: 66px; padding-top: 3px; }
.sidebar .icon-btn { width: 48px; height: 60px; }
.sidebar hr { width: 42px; height: 1px; margin: 18px 0; border: 0; background: #5f5f5f; }
.sidebar .push { margin: auto 0 4px; }
.sidebar .gear { margin-bottom: -4px; }

/* Context menu */
.menu-layer { position: absolute; top: 98px; right: 138px; width: 541px; }
.menu { position: relative; margin: 0; padding: 2px 6px 4px; list-style: none; overflow: hidden; border: 1px solid #5a5a5a; border-radius: 12px; background: #363636; box-shadow: 0 10px 24px rgba(0,0,0,.35); }
.menu::before { content: ""; position: absolute; left: -60px; top: -60px; width: 254px; height: 268px; background: #0c3b66; filter: blur(18px); }
.menu li { position: relative; display: flow-root; }
.menu button { display: grid; grid-template-columns: 52px 1fr auto 47px; column-gap: 2px; align-items: center; width: 100%; height: 42px; margin: 3px 0; border-radius: 8px; text-align: left; font-size: 20px; }
.menu button > :first-child { justify-self: center; }
.menu button > span { padding-left: 2px; }
.menu kbd { grid-column: 3; font: 17px "Open Sans", "Noto Sans", sans-serif; color: #cfcfcf; }
.menu .more { grid-column: 4; justify-self: center; margin-left: 12px; }
.menu .hover { background: #434343; }
.menu .sep { height: 1px; margin: 3px -5px 4px; background: rgba(255,255,255,.11); }
.menu .sep.tight { margin-bottom: 3px; }
.lang { font: 17px/24px "Open Sans", "Noto Sans CJK JP", sans-serif; white-space: nowrap; }
.highlight { position: absolute; left: -3px; bottom: 5px; width: 265px; height: 39px; border: 6px solid #e81c1c; }
.pointer { position: absolute; left: 192px; top: 100%; }

/* Taskbar */
.taskbar { display: grid; grid-template-columns: 1fr auto 1fr; align-items: center; flex: none; height: 72px; border-top: 2px solid #3c4448; background: #1c2328; }
.weather { display: flex; gap: 7px; align-items: center; padding-left: 33px; text-align: left; line-height: 24px; }
.weather svg { margin-top: -10px; }
.weather text { font-size: 17px; fill: #222; }
.weather small { display: block; font-size: 17px; color: #c2c5c7; }
.apps { display: flex; gap: 6px; padding-right: 28px; }
.apps button { position: relative; display: grid; place-items: center; width: 60px; height: 60px; border-radius: 6px; }
.apps .open::after { content: ""; position: absolute; left: 26px; bottom: 1px; width: 9px; height: 5px; border-radius: 3px; background: #9a9da0; }
.apps .current { background: #2a3238; box-shadow: inset 0 0 0 1px #343c42; }
.apps .current::after { left: 18px; width: 24px; background: #4cc2ff; }
.new { font-size: 10px; font-weight: 700; fill: #10242c; }
.tray { display: flex; justify-content: flex-end; align-items: center; padding-right: 31px; gap: 24px; }
.status { display: flex; gap: 10px; margin-right: 1px; }
.clock { text-align: right; line-height: 24px; margin-right: -11px; }
```
